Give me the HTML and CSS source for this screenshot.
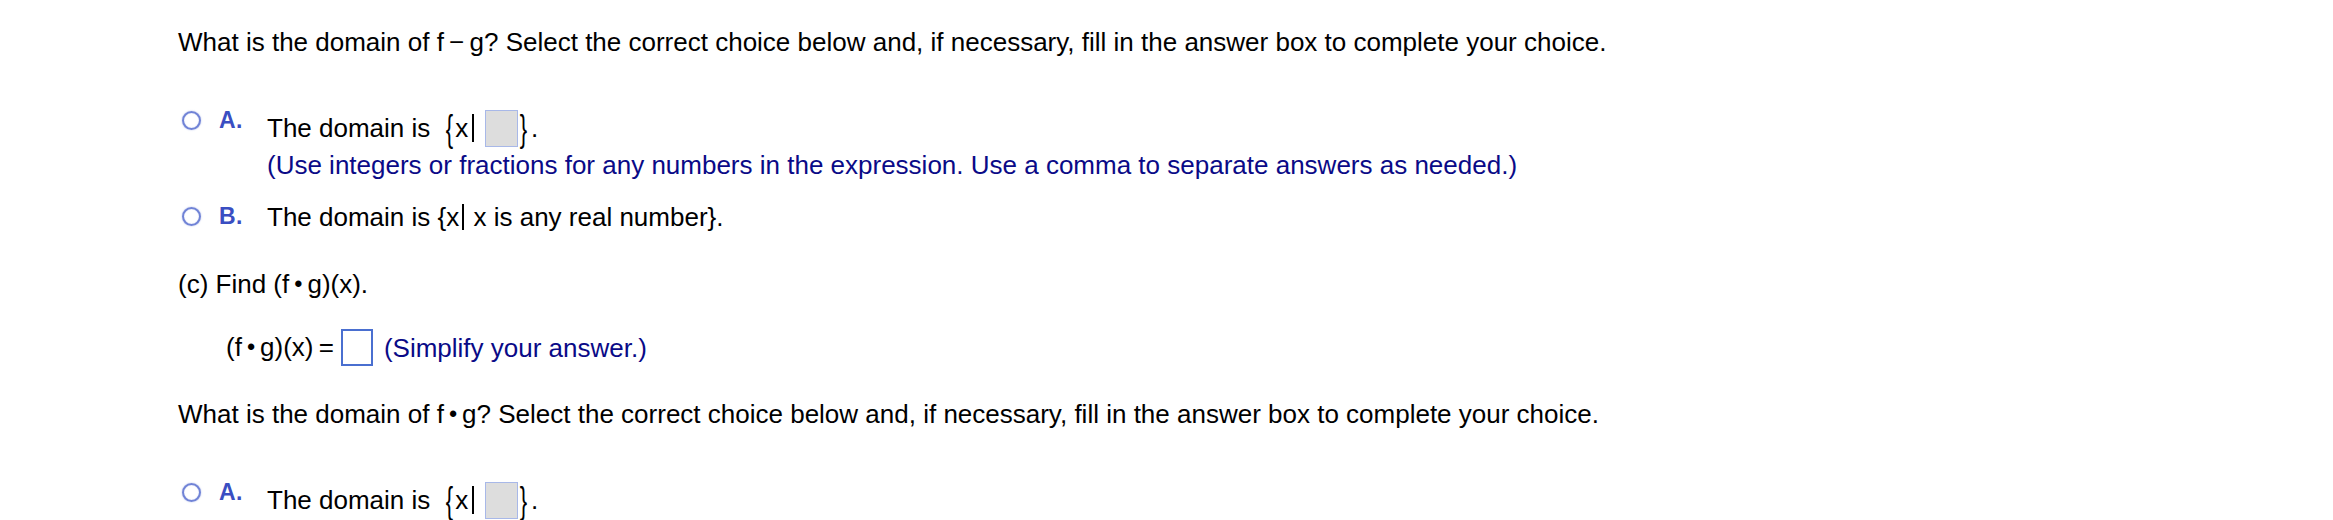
FILE: index.html
```html
<!DOCTYPE html>
<html>
<head>
<meta charset="utf-8">
<link rel="stylesheet" href="styles.css">
</head>
<body>
<div class="page">
  <p class="q q1">What is the domain of f&thinsp;−&thinsp;g? Select the correct choice below and, if necessary, fill in the answer box to complete your choice.</p>

  <div class="choice choice-a">
    <div class="marker"><span class="radio"></span><span class="label">A.</span></div>
    <div class="body">
      <div class="line">The domain is <span class="set"><span class="brace open">{</span>x<span class="bar"></span><span class="gbox"></span><span class="brace close">}</span></span><span class="period">.</span></div>
      <div class="hint">(Use integers or fractions for any numbers in the expression. Use a comma to separate answers as needed.)</div>
    </div>
  </div>

  <div class="choice choice-b">
    <div class="marker"><span class="radio"></span><span class="label">B.</span></div>
    <div class="body">
      <div class="line">The domain is {x<span class="bar sm"></span> x is any real number}.</div>
    </div>
  </div>

  <p class="q part">(c) Find (f<span class="dot">•</span>g)(x).</p>

  <div class="answer">
    <span>(f<span class="dot">•</span>g)(x)&thinsp;=</span>
    <span class="abox"></span>
    <span class="hint">(Simplify your answer.)</span>
  </div>

  <p class="q q2">What is the domain of f<span class="dot">•</span>g? Select the correct choice below and, if necessary, fill in the answer box to complete your choice.</p>

  <div class="choice choice-a2">
    <div class="marker"><span class="radio"></span><span class="label">A.</span></div>
    <div class="body">
      <div class="line">The domain is <span class="set"><span class="brace open">{</span>x<span class="bar"></span><span class="gbox"></span><span class="brace close">}</span></span><span class="period">.</span></div>
    </div>
  </div>
</div>
</body>
</html>
```

FILE: styles.css
```css
html, body {
  margin: 0;
  padding: 0;
  background: #ffffff;
}

body {
  font-family: "Liberation Sans", Arial, sans-serif;
  font-size: 26px;
  color: #000000;
  overflow: hidden;
  height: 520px;
}

.page {
  padding: 27px 0 0 178px;
}

.q {
  margin: 0;
  line-height: 30px;
  white-space: nowrap;
}

.choice {
  display: flex;
  align-items: flex-start;
  margin-left: 4px;
}

.marker {
  flex: none;
  width: 85px;
  height: 20px;
  display: flex;
  align-items: center;
}

.choice-a .marker,
.choice-a2 .marker {
  margin-top: -3px;
}

.choice-b .marker {
  margin-top: 4px;
}

.radio {
  flex: none;
  width: 15px;
  height: 15px;
  border: 2px solid #7083d6;
  border-radius: 50%;
  box-shadow: 0 0 1.5px rgba(112, 131, 214, 0.7), inset 0 0 1px rgba(112, 131, 214, 0.6);
}

.label {
  flex: none;
  margin-left: 18px;
  font-size: 23px;
  letter-spacing: 0.5px;
  font-weight: bold;
  color: #3a4ec2;
  line-height: 20px;
}

.body {
  display: flex;
  flex-direction: column;
}

.line {
  line-height: 30px;
  height: 30px;
  display: flex;
  align-items: center;
  white-space: pre;
}

.set {
  display: inline-flex;
  align-items: center;
  height: 30px;
}

.brace {
  display: inline-block;
  transform: scaleY(1.4) scaleX(0.85);
}

.brace.open {
  margin: 0 2px 0 7px;
}

.brace.close {
  margin: 0 0 0 1px;
}

.period {
  margin-left: 3px;
}

.bar {
  display: inline-block;
  width: 2px;
  height: 28px;
  background: #000;
  margin: 0 11px 0 4px;
}

.bar.sm {
  height: 26px;
  margin: 0 2px 0 3px;
}

.gbox {
  display: inline-block;
  width: 31px;
  height: 35px;
  background: #dddddd;
  border: 1.5px solid #a8b8e8;
}

.hint {
  color: #0a0a87;
  line-height: 30px;
  white-space: nowrap;
}

.choice-a {
  margin-top: 56px;
}

.choice-a .hint {
  margin-top: 7px;
}

.choice-b {
  margin-top: 22px;
}

.part {
  margin-top: 37px;
}

.answer {
  display: flex;
  align-items: center;
  margin: 29px 0 0 48px;
  height: 37px;
  white-space: nowrap;
}

.abox {
  display: inline-block;
  width: 28px;
  height: 33px;
  border: 2px solid #4a6fd0;
  margin: 0 11px 0 7px;
}

.q2 {
  margin-top: 33px;
}

.choice-a2 {
  margin-top: 55px;
}

.dot {
  font-size: 0.9em;
  margin: 0 5px;
  position: relative;
  top: -1px;
}
```
